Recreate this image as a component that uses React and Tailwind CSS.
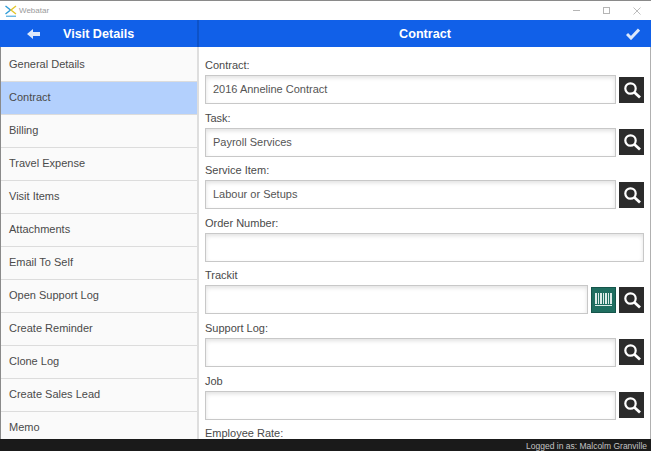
import React from 'react';

const menuItems = [
  'General Details',
  'Contract',
  'Billing',
  'Travel Expense',
  'Visit Items',
  'Attachments',
  'Email To Self',
  'Open Support Log',
  'Create Reminder',
  'Clone Log',
  'Create Sales Lead',
  'Memo',
];

const fields = [
  { label: 'Contract:', value: '2016 Anneline Contract', search: true },
  { label: 'Task:', value: 'Payroll Services', search: true },
  { label: 'Service Item:', value: 'Labour or Setups', search: true },
  { label: 'Order Number:', value: '' },
  { label: 'Trackit', value: '', search: true, barcode: true },
  { label: 'Support Log:', value: '', search: true },
  { label: 'Job', value: '', search: true },
];

const SearchButton = () => (
  <div className="w-[25px] h-[26px] shrink-0 bg-[#2b2b2b] flex items-center justify-center">
    <svg width="20" height="20" viewBox="0 0 20 20" fill="none" stroke="white">
      <circle cx="8.5" cy="8.5" r="5.2" strokeWidth="2.2" />
      <path d="M12.5 12.5L18 17.5" strokeWidth="2.8" />
    </svg>
  </div>
);

const BarcodeButton = () => (
  <div className="w-[25px] h-[26px] shrink-0 bg-[#1f6e60] border border-[#15544a] flex items-center justify-center">
    <svg width="18" height="14" viewBox="0 0 18 14" fill="#dcebe8">
      <rect x="0" y="0" width="2" height="11" />
      <rect x="3" y="0" width="1" height="11" />
      <rect x="5" y="0" width="2" height="11" />
      <rect x="8" y="0" width="1" height="11" />
      <rect x="10" y="0" width="2" height="11" />
      <rect x="13" y="0" width="1" height="11" />
      <rect x="15" y="0" width="2" height="11" />
      <rect x="0" y="12" width="17" height="1" />
    </svg>
  </div>
);

const App = () => {
  return (
    <div className="w-[651px] h-[451px] flex flex-col overflow-hidden bg-white text-[11px] text-[#4a4a4a] font-['Liberation_Sans',Arial,sans-serif]">
      {/* Title bar */}
      <div className="h-5 shrink-0 border-t border-[#8a8a8a] bg-white flex items-center pl-[5px]">
        <svg width="12" height="12" viewBox="0 0 12 12" fill="none">
          <path d="M0.5 1L5.5 5L0.5 9" stroke="#2e9bd6" strokeWidth="1.4" />
          <path d="M11 1L6 5L11 9" stroke="#e3c62a" strokeWidth="1.4" />
          <path d="M1 11.2H11" stroke="#2e9bd6" strokeWidth="1" />
        </svg>
        <span className="ml-[2px] text-[8px] text-[#9a9a9a]">Webatar</span>
        <div className="ml-auto flex items-center gap-[23px] pr-[10px]">
          <div className="w-[7px] h-px bg-[#b5b5b5]" />
          <div className="w-[7px] h-[7px] border border-[#b5b5b5]" />
          <svg width="8" height="8" viewBox="0 0 8 8" stroke="#b5b5b5" strokeWidth="0.9">
            <path d="M0.5 0.5L7.5 7.5M7.5 0.5L0.5 7.5" />
          </svg>
        </div>
      </div>

      {/* Header */}
      <div className="h-[27px] shrink-0 bg-[#1160e8] flex text-white font-bold text-[12.6px]">
        <div className="w-[197px] flex items-center pt-px">
          <svg className="ml-[27px]" width="13" height="10" viewBox="0 0 13 10" fill="#dce8fb">
            <path d="M0 5L6 0V3H13V7H6V10Z" />
          </svg>
          <span className="ml-[23px]">Visit Details</span>
        </div>
        <div className="w-[2px] bg-[#0d52c8]" />
        <div className="flex-1 flex items-center justify-center relative pt-px">
          Contract
          <svg className="absolute right-[11px] top-[8px]" width="14" height="12" viewBox="0 0 14 12" fill="none" stroke="#dce8fb" strokeWidth="3">
            <path d="M1 6L5 10L13 1.5" />
          </svg>
        </div>
      </div>

      <div className="flex-1 flex min-h-0">
        {/* Sidebar */}
        <div className="w-[199px] shrink-0 pt-[2px] border-l border-[#8a8a8a] border-r-2 border-r-[#dedede] overflow-hidden bg-[#fafafa]">
          {menuItems.map((item) => (
            <div
              key={item}
              className={`h-[33px] flex items-center pl-2 pb-[2px] border-b border-[#dcdcdc] ${item === 'Contract' ? 'bg-[#b3d0fd]' : ''}`}
            >
              {item}
            </div>
          ))}
        </div>

        {/* Form */}
        <div className="flex-1 overflow-hidden pl-[6px] pr-[6px] pt-[11px] border-r border-[#b0b0b0]">
          {fields.map((field) => (
            <div key={field.label} className="h-[52.6px]">
              <div className="h-[17px] leading-[15px]">{field.label}</div>
              <div className="flex items-center gap-[3px]">
                <div className="flex-1 h-[29px] border border-[#c8c8c8] shadow-[inset_0_2px_4px_rgba(0,0,0,0.12)] flex items-center pl-[7px] text-[#555]">
                  {field.value}
                </div>
                {field.barcode && <BarcodeButton />}
                {field.search && <SearchButton />}
              </div>
            </div>
          ))}
          <div className="leading-[15px]">Employee Rate:</div>
        </div>
      </div>

      {/* Footer */}
      <div className="h-3 shrink-0 bg-[#1a1a1a] text-[#c4c4c4] text-[8.5px] leading-[15px] text-right pr-[4px] overflow-hidden">
        Logged in as: Malcolm Granville
      </div>
    </div>
  );
};

export default App;
